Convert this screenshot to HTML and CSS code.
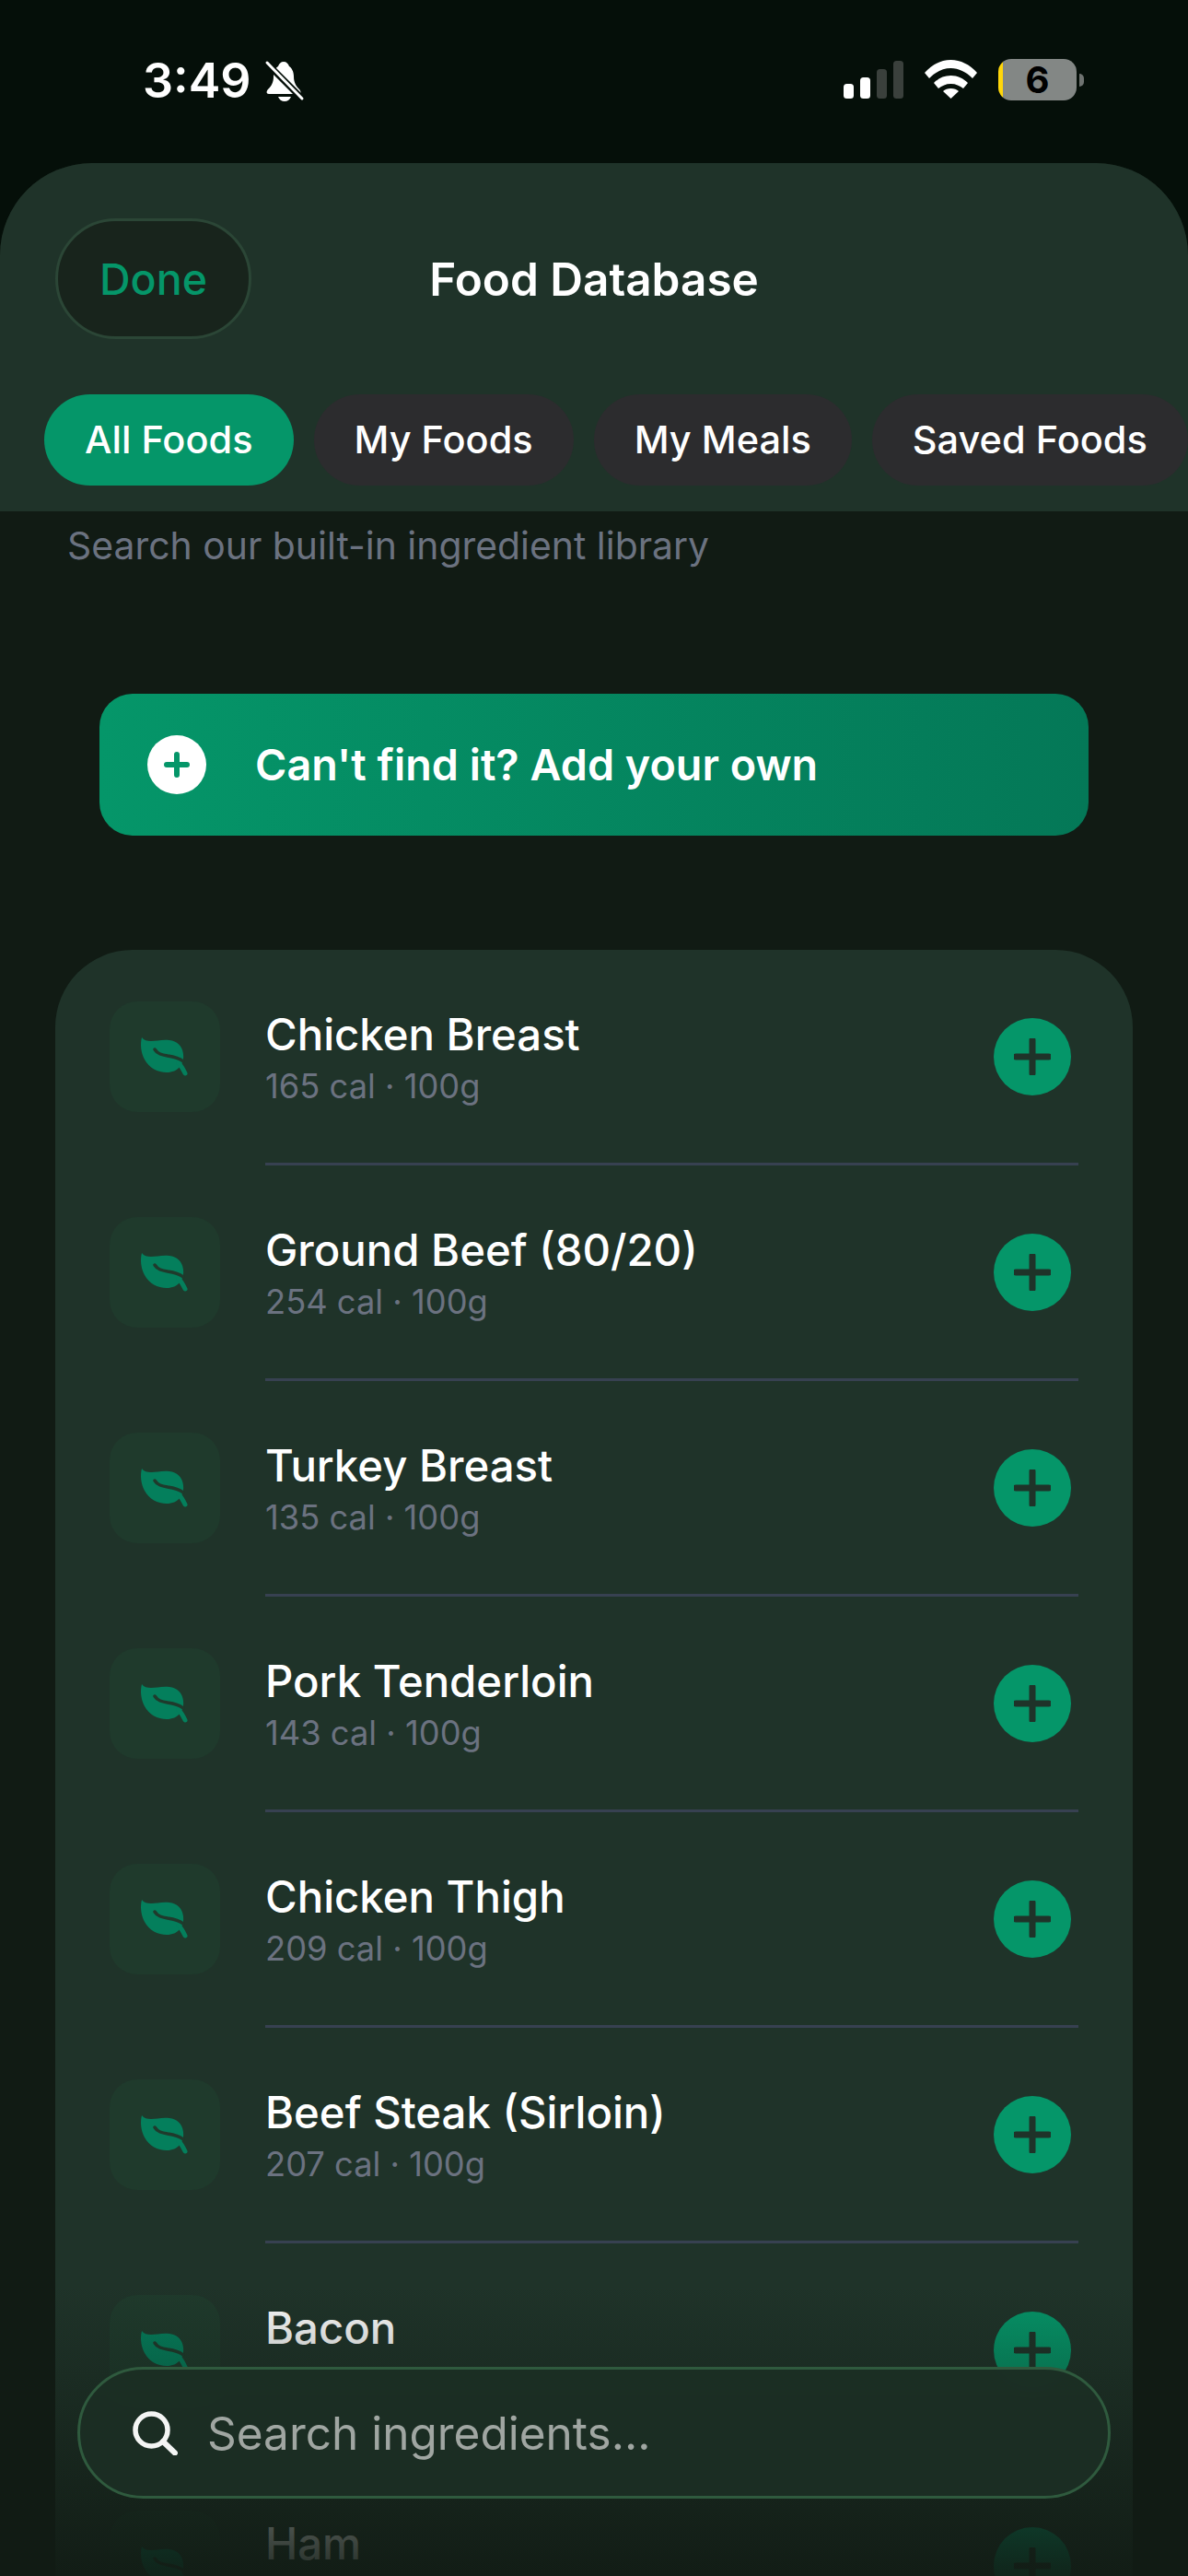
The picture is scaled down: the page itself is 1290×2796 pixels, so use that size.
FILE: index.html
```html
<!DOCTYPE html>
<html lang="en">
<head>
<meta charset="utf-8">
<title>Food Database</title>
<link rel="stylesheet" href="styles.css">
</head>
<body>
<div class="phone">
  <header class="status">
    <div class="status-left">
      <span class="time">3:49</span>
      <svg class="bell" viewBox="0 0 41 43">
        <path fill="#fff" d="M20 0c3 0 5 2 6 5 3 2 5 6 5 11 0 6 2 10 6 14 2 2 2 5 0 5H4c-3 0-3-3-1-5 4-4 6-8 6-14 0-5 2-9 5-11 1-3 3-5 6-5z"/>
        <path fill="#fff" d="M14 38h14c-1 3-4 5-7 5s-6-2-7-5z"/>
        <path stroke="#050f09" stroke-width="7" d="M0 0l41 41"/>
        <path stroke="#fff" stroke-width="3" stroke-linecap="round" d="M2 1l38 39"/>
      </svg>
    </div>
    <div class="status-right">
      <div class="signal">
        <span class="bar bar-1"></span>
        <span class="bar bar-2"></span>
        <span class="bar bar-3"></span>
        <span class="bar bar-4"></span>
      </div>
      <svg class="wifi" viewBox="0 0 57 42">
        <path fill="#fff" d="M0 14C8 5 18 0 28.500 0S49 5 57 14l-5 6C45 13 37 9 28.500 9S12 13 5 20z"/>
        <path fill="#fff" d="M10 25c5-5 11-8 18.500-8S42 20 47 25l-5 6c-4-3-8-5-13.500-5S19 28 15 31z"/>
        <path fill="#fff" d="M20 34c2-2 5-3 8.500-3s6.500 1 8.500 3l-8.500 8z"/>
      </svg>
      <div class="battery">
        <div class="battery-body"><span class="battery-num">6</span></div>
        <span class="battery-nub"></span>
      </div>
    </div>
  </header>

  <section class="sheet">
    <div class="sheet-head">
      <div class="nav">
        <button class="done">Done</button>
        <h1 class="title">Food Database</h1>
        <span class="nav-spacer"></span>
      </div>
      <nav class="chips">
        <span class="chip chip-on">All Foods</span>
        <span class="chip">My Foods</span>
        <span class="chip">My Meals</span>
        <span class="chip">Saved Foods</span>
      </nav>
    </div>

    <p class="subtitle">Search our built-in ingredient library</p>

    <button class="add-own">
      <span class="add-own-icon">
        <svg class="plus" viewBox="0 0 28 28"><path d="M14 3v22M3 14h22" stroke="#059669" stroke-width="6" stroke-linecap="round"/></svg>
      </span>
      <span class="add-own-text">Can't find it? Add your own</span>
    </button>

    <div class="card">
      <div class="row">
        <span class="tile"><svg class="leaf" viewBox="0 0 52 44"><use href="#leaf"/></svg></span>
        <div class="row-main">
          <div class="row-text"><div class="name">Chicken Breast</div><div class="meta">165 cal · 100g</div></div>
          <span class="add"><svg class="add-plus" viewBox="0 0 40 40"><use href="#plus"/></svg></span>
        </div>
      </div>
      <div class="row">
        <span class="tile"><svg class="leaf" viewBox="0 0 52 44"><use href="#leaf"/></svg></span>
        <div class="row-main">
          <div class="row-text"><div class="name">Ground Beef (80/20)</div><div class="meta">254 cal · 100g</div></div>
          <span class="add"><svg class="add-plus" viewBox="0 0 40 40"><use href="#plus"/></svg></span>
        </div>
      </div>
      <div class="row">
        <span class="tile"><svg class="leaf" viewBox="0 0 52 44"><use href="#leaf"/></svg></span>
        <div class="row-main">
          <div class="row-text"><div class="name">Turkey Breast</div><div class="meta">135 cal · 100g</div></div>
          <span class="add"><svg class="add-plus" viewBox="0 0 40 40"><use href="#plus"/></svg></span>
        </div>
      </div>
      <div class="row">
        <span class="tile"><svg class="leaf" viewBox="0 0 52 44"><use href="#leaf"/></svg></span>
        <div class="row-main">
          <div class="row-text"><div class="name">Pork Tenderloin</div><div class="meta">143 cal · 100g</div></div>
          <span class="add"><svg class="add-plus" viewBox="0 0 40 40"><use href="#plus"/></svg></span>
        </div>
      </div>
      <div class="row">
        <span class="tile"><svg class="leaf" viewBox="0 0 52 44"><use href="#leaf"/></svg></span>
        <div class="row-main">
          <div class="row-text"><div class="name">Chicken Thigh</div><div class="meta">209 cal · 100g</div></div>
          <span class="add"><svg class="add-plus" viewBox="0 0 40 40"><use href="#plus"/></svg></span>
        </div>
      </div>
      <div class="row">
        <span class="tile"><svg class="leaf" viewBox="0 0 52 44"><use href="#leaf"/></svg></span>
        <div class="row-main">
          <div class="row-text"><div class="name">Beef Steak (Sirloin)</div><div class="meta">207 cal · 100g</div></div>
          <span class="add"><svg class="add-plus" viewBox="0 0 40 40"><use href="#plus"/></svg></span>
        </div>
      </div>
      <div class="row">
        <span class="tile"><svg class="leaf" viewBox="0 0 52 44"><use href="#leaf"/></svg></span>
        <div class="row-main">
          <div class="row-text"><div class="name">Bacon</div><div class="meta">&nbsp;</div></div>
          <span class="add"><svg class="add-plus" viewBox="0 0 40 40"><use href="#plus"/></svg></span>
        </div>
      </div>
      <div class="row">
        <span class="tile"><svg class="leaf" viewBox="0 0 52 44"><use href="#leaf"/></svg></span>
        <div class="row-main">
          <div class="row-text"><div class="name">Ham</div><div class="meta">&nbsp;</div></div>
          <span class="add"><svg class="add-plus" viewBox="0 0 40 40"><use href="#plus"/></svg></span>
        </div>
      </div>
    </div>

    <div class="fade"></div>
    <div class="search">
      <svg class="search-icon" viewBox="0 0 49 48">
        <circle cx="20.500" cy="20.500" r="17.500" fill="none" stroke="#f4f5f4" stroke-width="5.500"/>
        <path d="M33 33l13 12.500" stroke="#f4f5f4" stroke-width="6" stroke-linecap="round"/>
      </svg>
      <span class="search-text">Search ingredients...</span>
    </div>
  </section>
</div>

<svg class="defs" width="0" height="0">
  <defs>
    <g id="leaf">
      <path fill="#047f5c" d="M1 1C3 4 7 5 11 5c6 0 12-2 20-1 8 1 14 6 15 15 .5 4 0 9-3 13-4 5-9 7-15 7-10 0-19-5-24-14C0 18-1 8 1 1z"/>
      <path fill="none" stroke="#047f5c" stroke-width="5" stroke-linecap="round" d="M41 29c3 3 5 7 7 11"/>
      <path fill="none" stroke="#1f3a2c" stroke-width="3.500" stroke-linecap="round" d="M15 14c3 5 8 6 14 7 7 1 12 2 17 6"/>
    </g>
    <g id="plus">
      <path d="M20 2v36M2 20h36" stroke="#1f3329" stroke-width="7" stroke-linecap="round"/>
    </g>
  </defs>
</svg>
</body>
</html>
```

FILE: styles.css
```css
* {
  box-sizing: border-box;
}

html,
body {
  margin: 0;
  padding: 0;
  width: 1290px;
  height: 2796px;
  overflow: hidden;
  background: #050f09;
  font-family: Inter, "Liberation Sans", sans-serif;
  color: #fff;
}

.defs {
  display: block;
  height: 0;
}

.phone {
  width: 1290px;
  height: 2796px;
  display: flex;
  flex-direction: column;
  overflow: hidden;
}

/* status bar */
.status {
  flex: 0 0 177px;
  display: flex;
  justify-content: space-between;
  align-items: flex-start;
  padding: 64px 113px 0 155px;
}

.status-left {
  display: flex;
  align-items: center;
  gap: 15px;
}

.time {
  font-size: 52px;
  line-height: 48px;
  font-weight: 600;
}

.bell {
  display: block;
  width: 41px;
  height: 43px;
  overflow: visible;
}

.status-right {
  display: flex;
  align-items: flex-end;
  height: 45px;
}

.signal {
  display: flex;
  align-items: flex-end;
  gap: 7px;
  margin-right: 23px;
  margin-bottom: 2px;
}

.bar {
  display: block;
  width: 11px;
  border-radius: 3.5px;
  background: #3a403c;
}

.bar-1 {
  height: 16px;
  background: #fff;
}

.bar-2 {
  height: 23px;
  background: #fff;
}

.bar-3 {
  height: 32px;
}

.bar-4 {
  height: 41px;
}

.wifi {
  display: block;
  width: 57px;
  height: 42px;
  margin-right: 23px;
  margin-bottom: 2px;
}

.battery {
  display: flex;
  align-items: center;
  gap: 3px;
}

.battery-body {
  width: 85px;
  height: 45px;
  border-radius: 14px;
  background: linear-gradient(90deg, #ffd60a 0, #ffd60a 5px, #838785 5px);
  display: flex;
  align-items: center;
  justify-content: center;
}

.battery-num {
  color: #000;
  font-size: 40px;
  line-height: 45px;
  font-weight: 700;
}

.battery-nub {
  display: block;
  width: 5px;
  height: 14px;
  border-radius: 0 5px 5px 0;
  background: #6f7371;
}

/* sheet */
.sheet {
  flex: 1;
  position: relative;
  display: flex;
  flex-direction: column;
  background: #111b14;
  border-radius: 100px 100px 0 0;
  overflow: hidden;
}

.sheet > * {
  flex: none;
}

.sheet-head {
  background: #1f3329;
  padding: 60px 0 28px;
}

.nav {
  display: grid;
  grid-template-columns: 1fr auto 1fr;
  align-items: center;
  padding-left: 60px;
  padding-right: 60px;
}

.done {
  width: 213px;
  height: 131px;
  border-radius: 66px;
  border: 3px solid #2b4636;
  background: #18241c;
  color: #059669;
  font-family: inherit;
  font-size: 46.500px;
  font-weight: 500;
  padding: 0;
}

.title {
  margin: 0;
  font-size: 49.500px;
  line-height: 60px;
  font-weight: 600;
  color: #fff;
}

.chips {
  display: flex;
  gap: 22px;
  margin-top: 60px;
  padding-left: 48px;
  white-space: nowrap;
}

.chip {
  flex: none;
  height: 99px;
  padding: 0 44px;
  border-radius: 50px;
  background: #2c2c2e;
  font-size: 41.500px;
  line-height: 99px;
  font-weight: 500;
  color: #fff;
}

.chip-on {
  background: #059669;
}

.subtitle {
  margin: 0;
  padding-left: 73px;
  font-size: 40.900px;
  line-height: 74px;
  color: #6b7280;
}

.add-own {
  display: flex;
  align-items: center;
  gap: 53px;
  height: 154px;
  margin: 124px 108px 0;
  padding: 0 0 0 52px;
  border: 0;
  border-radius: 36px;
  background: linear-gradient(90deg, #059669, #047857);
  color: #fff;
  font-family: inherit;
}

.add-own-icon {
  flex: none;
  width: 64px;
  height: 64px;
  border-radius: 50%;
  background: #fff;
  display: flex;
  align-items: center;
  justify-content: center;
}

.plus {
  display: block;
  width: 28px;
  height: 28px;
}

.add-own-text {
  font-size: 46.700px;
  line-height: 56px;
  font-weight: 600;
}

.card {
  margin: 124px 60px 0;
  background: #1f3329;
  border-radius: 84px 84px 0 0;
}

.row {
  display: flex;
  align-items: flex-start;
  gap: 49px;
  padding-left: 59px;
}

.tile {
  flex: none;
  width: 120px;
  height: 120px;
  margin-top: 56px;
  border-radius: 30px;
  background: #1f3a2c;
  display: flex;
  align-items: center;
  justify-content: center;
}

.leaf {
  display: block;
  width: 52px;
  height: 44px;
  overflow: visible;
}

.row-main {
  flex: 1;
  height: 234px;
  margin-right: 59px;
  padding-right: 8px;
  border-bottom: 3px solid #374151;
  display: flex;
  align-items: center;
  justify-content: space-between;
}

.row-text {
  margin-top: 3px;
}

.name {
  font-size: 47.300px;
  line-height: 58px;
  font-weight: 500;
  color: #fff;
}

.meta {
  font-size: 36.300px;
  line-height: 46px;
  margin-top: 4px;
  color: #6b7280;
}

.add {
  flex: none;
  width: 84px;
  height: 84px;
  border-radius: 50%;
  background: #059669;
  display: flex;
  align-items: center;
  justify-content: center;
}

.add-plus {
  display: block;
  width: 40px;
  height: 40px;
}

/* overlays */
.fade {
  position: absolute;
  left: 0;
  right: 0;
  bottom: 0;
  height: 316px;
  background: linear-gradient(180deg, rgba(17, 27, 20, 0), rgba(17, 27, 20, 0.92));
}

.search {
  position: absolute;
  left: 84px;
  right: 84px;
  bottom: 84px;
  height: 143px;
  display: flex;
  align-items: center;
  gap: 32px;
  padding-left: 57px;
  border: 3px solid #2f5a3e;
  border-radius: 72px;
  background: rgba(28, 46, 36, 0.98);
  backdrop-filter: blur(4px);
}

.search-icon {
  display: block;
  width: 49px;
  height: 48px;
  flex: none;
}

.search-text {
  font-size: 49.500px;
  line-height: 60px;
  color: #a0a6a2;
}
```
